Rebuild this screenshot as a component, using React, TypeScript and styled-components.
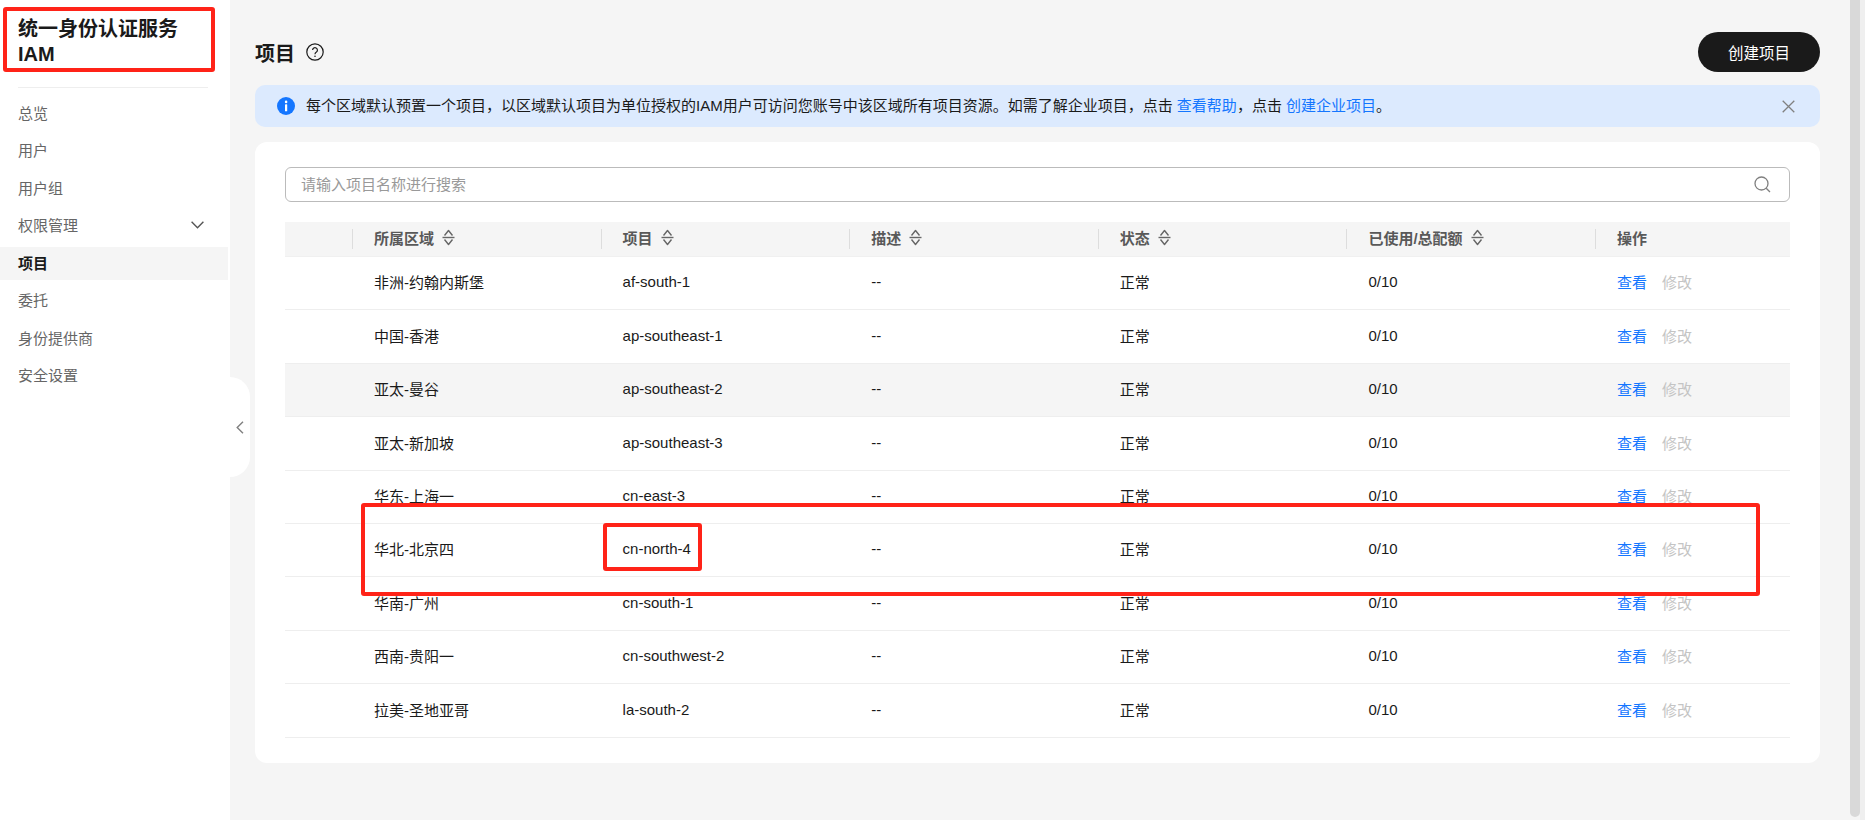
import React from "react";
import styled, { createGlobalStyle } from "styled-components";

const FONT = `"Liberation Sans", "Noto Sans CJK SC", sans-serif`;
const RED = "#ff2318";

const GlobalStyle = createGlobalStyle`
  html, body {
    margin: 0;
    padding: 0;
    height: 100%;
    overflow: hidden;
    background: #fff;
  }
  body {
    font-family: ${FONT};
    font-size: 15px;
    color: #1a1a1a;
  }
  * {
    box-sizing: border-box;
  }
`;

const Page = styled.div`
  position: relative;
  display: flex;
  width: 1875px;
  height: 820px;
  overflow: hidden;
`;

const Sidebar = styled.aside`
  position: relative;
  flex: 0 0 230px;
  padding-top: 17px;
  background: #fff;
`;

const SideTitle = styled.h1`
  margin: 0 22px 0 18px;
  font-size: 20px;
  line-height: 25px;
  font-weight: 700;
  color: #1a1a1a;
`;

const SideDivider = styled.div`
  height: 1px;
  margin: 20px 22px 0 18px;
  background: #eeeeee;
`;

const SideNav = styled.nav`
  display: flex;
  flex-direction: column;
  gap: 4.5px;
  width: 228px;
  margin-top: 9px;
`;

const SideItem = styled.a<{ $active?: boolean }>`
  display: flex;
  align-items: center;
  justify-content: space-between;
  height: 33px;
  padding: 0 24px 3px 18px;
  font-size: 15px;
  font-weight: ${(p) => (p.$active ? 700 : 400)};
  color: ${(p) => (p.$active ? "#1a1a1a" : "#666666")};
  background: ${(p) => (p.$active ? "#f5f5f5" : "transparent")};
`;

const Collapse = styled.div`
  position: absolute;
  top: 377px;
  left: 230px;
  display: flex;
  align-items: center;
  justify-content: center;
  width: 20px;
  height: 100px;
  border-radius: 0 20px 20px 0;
  background: #fff;
  color: #808080;
  z-index: 2;
`;

const Main = styled.main`
  flex: 0 0 1620px;
  display: flex;
  flex-direction: column;
  padding: 32px 30px 0 25px;
  background: #f5f5f5;
  border-top: 1px solid #f0f0f0;
  margin-top: -1px;
`;

const Header = styled.header`
  display: flex;
  align-items: center;
  justify-content: space-between;
  height: 40px;
`;

const HeadingRow = styled.div`
  display: flex;
  align-items: center;
  gap: 11px;
`;

const Heading = styled.h2`
  margin: 0;
  font-size: 20px;
  font-weight: 700;
  color: #1a1a1a;
`;

const CreateButton = styled.button`
  width: 122px;
  height: 40px;
  border: 0;
  border-radius: 20px;
  background: #1a1a1a;
  color: #fff;
  font-family: inherit;
  font-size: 15.5px;
`;

const Banner = styled.div`
  display: flex;
  align-items: center;
  gap: 11px;
  height: 42px;
  margin-top: 13px;
  padding: 0 25px 0 22px;
  border-radius: 10px;
  background: #dceafe;
  font-size: 15px;
  color: #1a1a1a;
`;

const BannerText = styled.span`
  flex: 1;
  padding-bottom: 3px;
`;

const BannerLink = styled.a`
  color: #1476ff;
`;

const Card = styled.section`
  height: 621px;
  margin-top: 15px;
  padding: 25px 30px 0;
  border-radius: 12px;
  background: #fff;
`;

const SearchBox = styled.div`
  display: flex;
  align-items: center;
  justify-content: space-between;
  height: 35px;
  padding: 0 18px 0 15px;
  border: 1px solid #bbbbbb;
  border-radius: 6px;
  color: #808080;
`;

const Placeholder = styled.span`
  padding-bottom: 2px;
  font-size: 15px;
  color: #999999;
`;

const TableGrid = styled.div`
  margin-top: 20px;
`;

const Row = styled.div<{ $hover?: boolean }>`
  display: grid;
  grid-template-columns: 68px repeat(5, 248.6px) 1fr;
  align-items: center;
  height: 53.4px;
  border-bottom: 1px solid #eeeeee;
  background: ${(p) => (p.$hover ? "#f5f5f5" : "transparent")};
`;

const HeadRow = styled(Row)`
  height: 35px;
  background: #f5f5f5;
  border-bottom: 1px solid #f0f0f0;
`;

const HeadCell = styled.div<{ $bare?: boolean }>`
  display: flex;
  align-items: center;
  gap: 8px;
  height: 20px;
  padding-left: 21px;
  padding-bottom: ${(p) => (p.$bare ? "0" : "3px")};
  border-right: ${(p) => (p.$bare ? "1px solid #dddddd" : "0")};
  border-left: ${(p) => (p.$bare ? "0" : "1px solid #dddddd")};
  font-size: 15px;
  font-weight: 600;
  color: #595959;
  margin-left: ${(p) => (p.$bare ? "0" : "-1px")};
`;

const Cell = styled.div`
  padding-left: 21px;
  padding-bottom: 2.5px;
  font-size: 15px;
  color: #1a1a1a;
`;

const Actions = styled(Cell)`
  display: flex;
  gap: 15px;
`;

const ViewLink = styled.a`
  color: #1476ff;
`;

const EditLink = styled.a`
  color: #c4c4c4;
`;

const ScrollTrack = styled.div`
  flex: 0 0 15px;
  display: flex;
  align-items: stretch;
  padding-bottom: 3px;
  background: linear-gradient(to right, #f5f5f5 10px, #efefef 10px);
`;

const ScrollThumb = styled.div`
  width: 10px;
  border-radius: 0 0 5px 5px;
  background: #d9d9d9;
`;

const Mark = styled.div<{ $x: number; $y: number; $w: number; $h: number }>`
  position: absolute;
  left: ${(p) => p.$x}px;
  top: ${(p) => p.$y}px;
  width: ${(p) => p.$w}px;
  height: ${(p) => p.$h}px;
  border: 4px solid ${RED};
  border-radius: 3px;
  pointer-events: none;
  z-index: 5;
`;

const SortIcon = () => (
  <svg width="13" height="17" viewBox="0 0 13 17" fill="none" stroke="#666" strokeWidth="1.4">
    <path d="M2.5 6.5 6.5 1.5 10.5 6.5" strokeLinejoin="round" />
    <path d="M2.5 10.5 6.5 15.5 10.5 10.5" strokeLinejoin="round" />
    <path d="M.5 8.5h12" />
  </svg>
);

const HelpIcon = () => (
  <svg width="18" height="18" viewBox="0 0 18 18" fill="none" stroke="#1a1a1a">
    <circle cx="9" cy="9" r="8.2" strokeWidth="1.2" />
    <path d="M6.6 7.1a2.4 2.4 0 1 1 3.8 2c-.9.6-1.4 1.1-1.4 2.1" strokeWidth="1.2" />
    <circle cx="9" cy="13.3" r=".8" fill="#1a1a1a" stroke="none" />
  </svg>
);

const InfoIcon = () => (
  <svg width="18" height="18" viewBox="0 0 18 18">
    <circle cx="9" cy="9" r="9" fill="#1476ff" />
    <rect x="8" y="7.3" width="2.2" height="7" rx=".4" fill="#fff" />
    <circle cx="9.1" cy="4.9" r="1.3" fill="#fff" />
  </svg>
);

const CloseIcon = () => (
  <svg width="13" height="13" viewBox="0 0 13 13" stroke="#808080" strokeWidth="1.3">
    <path d="M.7.7l11.6 11.6M12.3.7.7 12.3" />
  </svg>
);

const SearchIcon = () => (
  <svg width="17" height="17" viewBox="0 0 17 17" fill="none" stroke="#808080" strokeWidth="1.3">
    <circle cx="7.5" cy="7.5" r="6.5" />
    <path d="M12.2 12.2 16 16" />
  </svg>
);

const ChevronDown = () => (
  <svg width="13" height="8" viewBox="0 0 13 8" fill="none" stroke="#555" strokeWidth="1.4">
    <path d="M.6.8l5.9 5.9L12.4.8" />
  </svg>
);

const ChevronLeft = () => (
  <svg width="8" height="13" viewBox="0 0 8 13" fill="none" stroke="#808080" strokeWidth="1.4">
    <path d="M7 .7 1.2 6.5 7 12.3" />
  </svg>
);

const navItems = ["总览", "用户", "用户组", "权限管理", "项目", "委托", "身份提供商", "安全设置"];

const columns = ["所属区域", "项目", "描述", "状态", "已使用/总配额"];

const projects = [
  ["非洲-约翰内斯堡", "af-south-1"],
  ["中国-香港", "ap-southeast-1"],
  ["亚太-曼谷", "ap-southeast-2"],
  ["亚太-新加坡", "ap-southeast-3"],
  ["华东-上海一", "cn-east-3"],
  ["华北-北京四", "cn-north-4"],
  ["华南-广州", "cn-south-1"],
  ["西南-贵阳一", "cn-southwest-2"],
  ["拉美-圣地亚哥", "la-south-2"],
];

export default function App() {
  return (
    <Page>
      <GlobalStyle />
      <Sidebar>
        <SideTitle>
          统一身份认证服务
          <br />
          IAM
        </SideTitle>
        <SideDivider />
        <SideNav>
          {navItems.map((item) => (
            <SideItem key={item} $active={item === "项目"}>
              {item}
              {item === "权限管理" && <ChevronDown />}
            </SideItem>
          ))}
        </SideNav>
      </Sidebar>
      <Collapse>
        <ChevronLeft />
      </Collapse>
      <Main>
        <Header>
          <HeadingRow>
            <Heading>项目</Heading>
            <HelpIcon />
          </HeadingRow>
          <CreateButton>创建项目</CreateButton>
        </Header>
        <Banner>
          <InfoIcon />
          <BannerText>
            每个区域默认预置一个项目，以区域默认项目为单位授权的IAM用户可访问您账号中该区域所有项目资源。如需了解企业项目，点击{" "}
            <BannerLink>查看帮助</BannerLink>，点击 <BannerLink>创建企业项目</BannerLink>。
          </BannerText>
          <CloseIcon />
        </Banner>
        <Card>
          <SearchBox>
            <Placeholder>请输入项目名称进行搜索</Placeholder>
            <SearchIcon />
          </SearchBox>
          <TableGrid>
            <HeadRow>
              <HeadCell $bare />
              {columns.map((col) => (
                <HeadCell key={col}>
                  {col}
                  <SortIcon />
                </HeadCell>
              ))}
              <HeadCell>操作</HeadCell>
            </HeadRow>
            {projects.map(([region, id]) => (
              <Row key={id} $hover={id === "ap-southeast-2"}>
                <div />
                <Cell>{region}</Cell>
                <Cell>{id}</Cell>
                <Cell>--</Cell>
                <Cell>正常</Cell>
                <Cell>0/10</Cell>
                <Actions>
                  <ViewLink>查看</ViewLink>
                  <EditLink>修改</EditLink>
                </Actions>
              </Row>
            ))}
          </TableGrid>
        </Card>
      </Main>
      <ScrollTrack>
        <ScrollThumb />
      </ScrollTrack>
      <Mark $x={3} $y={7} $w={212} $h={65} />
      <Mark $x={361} $y={503} $w={1399} $h={93} />
      <Mark $x={603} $y={523} $w={99} $h={48} />
    </Page>
  );
}
